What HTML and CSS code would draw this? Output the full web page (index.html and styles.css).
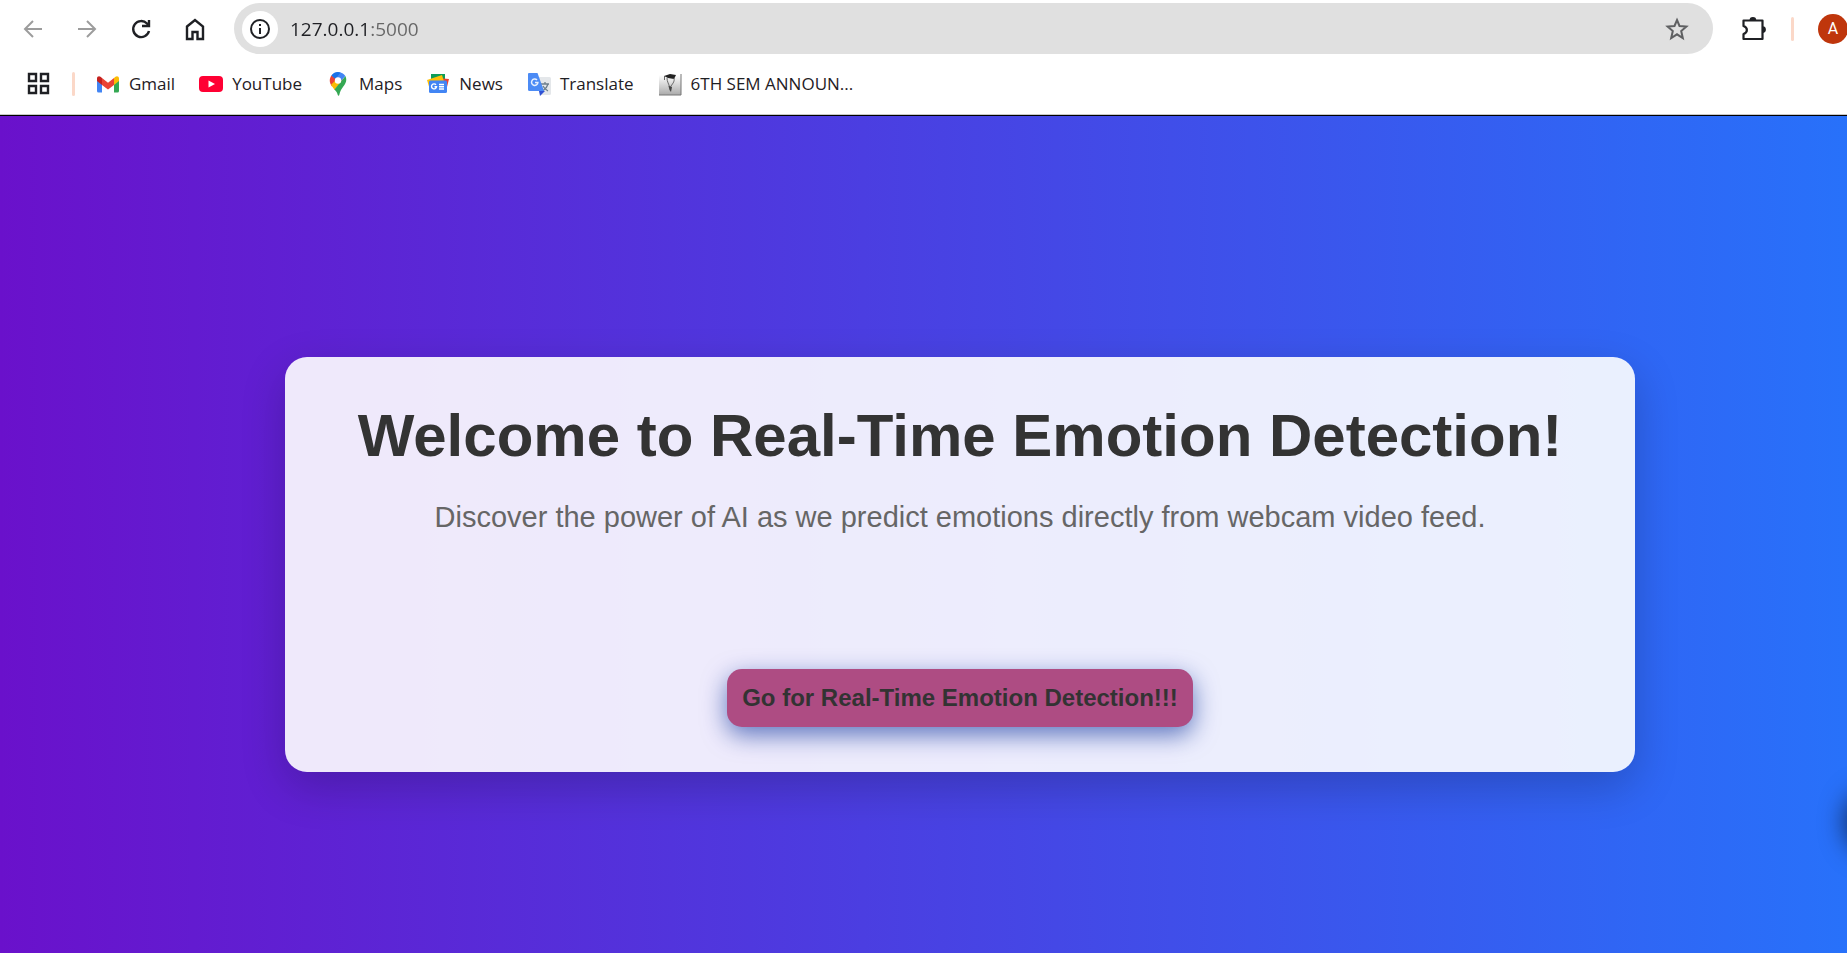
FILE: index.html
```html
<!DOCTYPE html>
<html lang="en">
<head>
<meta charset="utf-8">
<title>Real-Time Emotion Detection</title>
<link rel="stylesheet" href="styles.css">
</head>
<body>
<header class="browser">
  <div class="toolbar">
    <button class="tool tool-muted" aria-label="Back"><svg viewBox="0 0 24 24" class="icon line"><path d="M21 12H4M12 4L4 12l8 8"/></svg></button>
    <button class="tool tool-muted" aria-label="Forward"><svg viewBox="0 0 24 24" class="icon line"><path d="M3 12h17M12 4l8 8-8 8"/></svg></button>
    <button class="tool" aria-label="Reload"><svg viewBox="0 0 24 24" class="icon line bold"><path d="M20 14A8 8 0 1 1 18 6.500L20 8.500M20 3v6h-7"/></svg></button>
    <button class="tool" aria-label="Home"><svg viewBox="0 0 24 24" class="icon line bold"><path d="M4 9.500L12 3l8 6.500V22h-5.500v-7h-5v7H4z"/></svg></button>
    <div class="address">
      <button class="site-info" aria-label="Site information"><svg viewBox="0 0 24 24" class="icon line"><circle cx="12" cy="12" r="9"/><path d="M12 11v6M12 7v2"/></svg></button>
      <input class="url" type="text" aria-label="Address" value="127.0.0.1:5000">
      <button class="star" aria-label="Bookmark this page"><svg viewBox="0 0 24 24" class="icon line"><path d="M12 3l2.500 6 6.900.6-5.200 4.500 1.600 6.900-5.800-3.700L6.200 21l1.600-6.900L2.600 9.600l6.900-.6z"/></svg></button>
    </div>
    <button class="tool extensions" aria-label="Extensions"><svg viewBox="0 0 24 24" class="icon"><path d="M1.500 3.500h19v18.500h-19v-5c4.500-1.500 4.500-6.500 0-8z" fill="none" stroke="currentColor" stroke-width="2.200" stroke-linejoin="round"/><path d="M7.500 3.500a3.400 3.400 0 0 1 6.800 0zM20.500 9.200a3.400 3.400 0 0 1 0 6.800z" fill="currentColor"/></svg></button>
    <span class="divider"></span>
    <button class="avatar" aria-label="Profile">A</button>
  </div>
  <nav class="bookmarks" aria-label="Bookmarks">
    <button class="apps" aria-label="Apps"><svg viewBox="0 0 24 24" class="icon line bold"><path d="M2 2h7v7H2zM14 2h7v7h-7zM2 14h7v7H2zM14 14h7v7h-7z"/></svg></button>
    <span class="divider"></span>
    <a class="bookmark" href="#"><svg viewBox="0 0 24 24" class="icon"><path d="M1 8l5 4v8.500H2.500Q1 20.500 1 19z" fill="#4285f4"/><path d="M18 12l5-4v11Q23 20.500 21.500 20.500H18z" fill="#34a853"/><path d="M18 6l1.500-1.200C21 3.500 23 4.500 23 6.500V9l-5 4z" fill="#fbbc04"/><path d="M6 6l6 4.800L18 6v7l-6 4.500L6 13z" fill="#ea4335"/><path d="M6 6L4.500 4.800C3 3.500 1 4.500 1 6.500V9l5 4z" fill="#c5221f"/></svg>Gmail</a>
    <a class="bookmark" href="#"><svg viewBox="0 0 24 24" class="icon"><rect y="4" width="24" height="16" rx="4" fill="#ff0033"/><path d="M9.500 8.500l6.500 3.500-6.500 3.500z" fill="#fff"/></svg>YouTube</a>
    <a class="bookmark" href="#"><svg viewBox="0 0 24 24" class="icon"><path d="M6 3l6 5-6 6.500C3 10.500 3 6 6 3z" fill="#ea4335"/><path d="M5 12.800L15 3l2 5-8.500 10C7.400 16 6 14.700 5 12.800z" fill="#fbbc04"/><path d="M19.400 4c3.500 8-4.400 10.500-6 18.500-.3 1.800-1.400 1.800-1.800 0-.5-2-1.600-3.500-3.100-5z" fill="#34a853"/><path d="M5.500 3.500A8.500 8.500 0 0 1 19.400 4L15 9 9 6.400z" fill="#4285f4"/><path d="M5.500 3.500A8.500 8.500 0 0 1 14.500.4L9.500 7z" fill="#1a73e8"/><circle cx="12" cy="8.500" r="3.200" fill="#fff"/></svg>Maps</a>
    <a class="bookmark" href="#"><svg viewBox="0 0 24 24" class="icon"><path d="M5 2h14v10H5z" fill="#0c9d58"/><path d="M11 6l12 1-3 12z" fill="#ea4335"/><path d="M1 8l15-5 3 10L4 18z" fill="#ffc107"/><rect x="3" y="8.500" width="18" height="12.500" rx="1.500" fill="#4285f4"/><path d="M10 12.800a2.500 2.500 0 1 0 .5 2H8.500M13 12.500h5M13 14.800h5M13 17h5" fill="none" stroke="#fff" stroke-width="1.400"/></svg>News</a>
    <a class="bookmark" href="#"><svg viewBox="0 0 24 24" class="icon"><path d="M10 5h12.500q1.500 0 1.500 1.500v15q0 1.500-1.500 1.500H14z" fill="#e4e7ea"/><path d="M14 12h8M18 10v2M21 12c-1 4-3 5-5.500 7M16 14c1 2 3 4 5 5" stroke="#6d7f8c" stroke-width="1.300" fill="none"/><path d="M12 19h6l-5 5z" fill="#3051d3"/><path d="M2 1h8.500L17 19H2.500Q1 19 1 17.500V2q0-1 1-1z" fill="#4c8bf5"/><path d="M10 8a3.200 3.200 0 1 0 .9 2.500H8" stroke="#e8f0fe" stroke-width="1.500" fill="none"/></svg>Translate</a>
    <a class="bookmark" href="#"><svg viewBox="0 0 24 24" class="icon"><defs><linearGradient id="paper" x2="0" y2="1"><stop stop-color="#fff"/><stop offset="1" stop-color="#aaa"/></linearGradient></defs><path d="M1 3h22v20H1z" fill="url(#paper)"/><path d="M23 2v21H1" stroke="#777" fill="none"/><path d="M6 4l6-2 6 1-2 4-6-1z" fill="#222"/><path d="M6.500 4v4M9 6c0 4 2 6 2.500 9M16 6c1 4-2 6-3.500 9" stroke="#666" fill="none"/><path d="M10.500 14l3.500 1-1 5-1.500-2z" fill="#444"/></svg>6TH SEM ANNOUN...</a>
  </nav>
</header>
<main class="hero">
  <div class="stage">
    <section class="card">
      <h1 class="title">Welcome to Real-Time Emotion Detection!</h1>
      <p class="lead">Discover the power of AI as we predict emotions directly from webcam video feed.</p>
      <a class="cta" href="#">Go for Real-Time Emotion Detection!!!</a>
    </section>
  </div>
  <div class="edge-shadow"></div>
</main>
</body>
</html>
```
FILE: styles.css
```css
* { box-sizing: border-box; }

body {
  margin: 0;
  height: 100vh;
  display: flex;
  flex-direction: column;
  overflow: hidden;
  font-family: "Liberation Sans", Arial, sans-serif;
}

button {
  border: 0;
  padding: 0;
  background: none;
  color: inherit;
  font: inherit;
  flex: none;
  display: flex;
  align-items: center;
  justify-content: center;
}

.icon { width: 24px; height: 24px; flex: none; display: block; }
.line { fill: none; stroke: currentColor; stroke-width: 2; }
.bold { stroke-width: 2.4; }

.browser {
  background: #fff;
  color: #1f2024;
  border-bottom: 1px solid #000;
  box-shadow: inset 0 -1px #c8c8c8;
  font-family: "Open Sans", "Noto Sans", sans-serif;
  flex: none;
}

.toolbar {
  display: flex;
  align-items: center;
  padding: 3px 0 0 6px;
}

.tool { width: 54px; height: 51px; }
.tool-muted { color: #9c9c9c; }

.address {
  flex: 1;
  height: 51px;
  margin: 0 14px 0 12px;
  padding: 0 24px 0 8px;
  display: flex;
  align-items: center;
  gap: 12px;
  border-radius: 26px;
  background: #e0e0e0;
}

.site-info {
  width: 36px;
  height: 36px;
  border-radius: 50%;
  background: #fff;
}

.url {
  flex: 1;
  min-width: 0;
  border: 0;
  padding: 0;
  font: 19px/28px "Open Sans", "Noto Sans", sans-serif;
  color: transparent;
  background: linear-gradient(to right, #1f2024 81px, #666 81px);
  background-clip: text;
  -webkit-background-clip: text;
  outline: 0;
}

.star { color: #5f6062; }

.divider {
  width: 3px;
  height: 24px;
  border-radius: 2px;
  background: #fbd8c8;
  flex: none;
}

.avatar {
  width: 30px;
  height: 30px;
  margin: 0 -1px 0 24px;
  border-radius: 50%;
  background: #bf360c;
  color: #fff;
  font: 16px Roboto, sans-serif;
}

.extensions { margin-right: 10px; }

.bookmarks {
  display: flex;
  align-items: center;
  height: 61px;
  padding: 0 0 1px 27px;
}

.apps { margin-right: 21px; }
.bookmarks .divider { margin-right: 21px; }

.bookmark {
  display: flex;
  align-items: center;
  gap: 9px;
  margin-right: 24px;
  color: #1f2024;
  font-size: 17px;
  line-height: 24px;
  text-decoration: none;
  white-space: nowrap;
}

.hero {
  flex: 1;
  position: relative;
  display: flex;
  overflow: hidden;
}

/* the page is slightly wider than the visible window */
.stage {
  flex: none;
  width: calc(100% + 73px);
  display: flex;
  align-items: center;
  justify-content: center;
  padding-top: 60px;
  background: linear-gradient(to right, #6a11cb, #2575fc);
}

.card {
  width: 1350px;
  max-width: 90%;
  padding: 45px 60px;
  display: flex;
  flex-direction: column;
  align-items: center;
  text-align: center;
  border-radius: 22px;
  background: rgba(255, 255, 255, 0.9);
  box-shadow: 0 15px 45px rgba(0, 0, 0, 0.2);
}

.title {
  margin: 0 0 30px;
  color: #333;
  font-size: 60px;
  line-height: 68px;
}

.lead {
  margin: 0 0 135px;
  color: #666;
  font-size: 29px;
  line-height: 34px;
}

.cta {
  padding: 15px;
  border-radius: 15px;
  background: #ae4c83;
  color: #333;
  font-size: 24px;
  font-weight: bold;
  line-height: 28px;
  text-decoration: none;
  box-shadow: 0 8px 24px rgba(0, 40, 150, 0.6);
}

.edge-shadow {
  position: absolute;
  right: -61px;
  bottom: 101px;
  width: 60px;
  height: 60px;
  border-radius: 50%;
  box-shadow: 0 0 28px rgba(0, 0, 0, 0.8);
}
```
